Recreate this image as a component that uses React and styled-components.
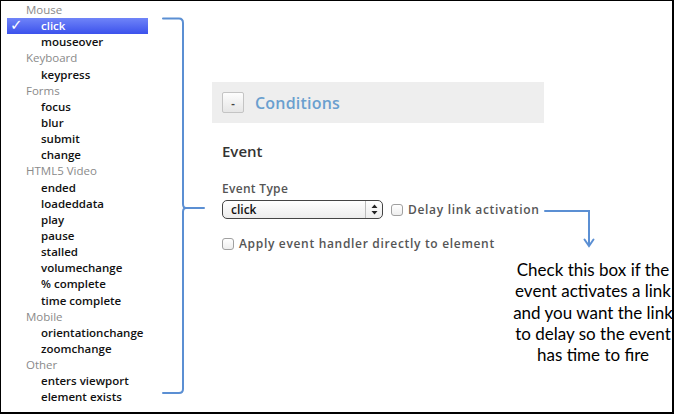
import React from 'react'
import styled, { createGlobalStyle } from 'styled-components'

const GlobalStyle = createGlobalStyle`
  html, body { margin: 0; padding: 0; background: #fff; }
  body { font-family: "Open Sans", "DejaVu Sans", sans-serif; }
`

const Frame = styled.div`
  position: relative;
  width: 674px;
  height: 414px;
  box-sizing: border-box;
  border-style: solid;
  border-color: #000;
  border-width: 1px 2px 2px 1px;
  display: flex;
  overflow: hidden;
`

const Menu = styled.ul`
  list-style: none;
  margin: 0 0 0 6px;
  padding: 1px 0 0;
  width: 141px;
`

const Row = styled.li`
  position: relative;
  height: 16.15px;
  line-height: 16px;
  font-size: 11.5px;
  padding-left: ${p => (p.$group ? 19 : 34)}px;
  color: ${p => (p.$group ? '#8a8a8a' : p.$active ? '#fff' : '#111')};
  font-weight: ${p => (p.$group ? 400 : 600)};
  background: ${p => (p.$active ? 'linear-gradient(#6f84f8, #3c52ec)' : 'transparent')};
  white-space: nowrap;
`

const Check = styled.span`
  position: absolute;
  left: 3px;
  top: -1px;
  font-family: "DejaVu Sans", sans-serif;
  font-size: 15px;
  font-weight: 700;
`

const Main = styled.div`
  margin-left: 64px;
  padding-top: 81px;
  width: 332px;
`

const Header = styled.div`
  display: flex;
  align-items: center;
  gap: 11px;
  height: 41px;
  padding-left: 10px;
  background: #eeeeee;
`

const ToggleButton = styled.div`
  width: 22px;
  height: 21px;
  box-sizing: border-box;
  border: 1px solid #c4c4c4;
  border-radius: 2px;
  background: linear-gradient(#fdfdfd, #e6e6e6);
  display: flex;
  align-items: center;
  justify-content: center;
  font-size: 11px;
  font-weight: 700;
  color: #444;
`

const Title = styled.h2`
  margin: 0;
  font-size: 16px;
  font-weight: 600;
  color: #6a9fcf;
  letter-spacing: 0.2px;
`

const Body = styled.div`
  padding: 18px 0 0 10px;
`

const Section = styled.h3`
  margin: 0 0 19px;
  font-size: 15px;
  font-weight: 600;
  color: #333;
`

const Label = styled.div`
  font-size: 12px;
  font-weight: 600;
  color: #555;
  margin-bottom: 3px;
  letter-spacing: 0.3px;
`

const Line = styled.div`
  display: flex;
  align-items: center;
  gap: 5px;
  margin-bottom: ${p => p.$gap || 0}px;
`

const Select = styled.div`
  width: 161px;
  height: 19px;
  box-sizing: border-box;
  border: 1px solid #444;
  border-radius: 5px;
  background: linear-gradient(#ffffff, #ececec);
  display: flex;
  align-items: center;
  justify-content: space-between;
  padding: 0 0 0 8px;
  font-size: 12px;
  font-weight: 600;
  color: #111;
`

const Arrows = styled.div`
  width: 16px;
  height: 100%;
  border-left: 1px solid #bbb;
  display: flex;
  align-items: center;
  justify-content: center;
`

const Box = styled.span`
  width: 12px;
  height: 12px;
  box-sizing: border-box;
  border: 1px solid #a0a0a0;
  border-radius: 3px;
  background: linear-gradient(#fff, #eee);
  margin-left: ${p => p.$offset || 0}px;
`

const CheckText = styled.span`
  font-size: 12px;
  font-weight: 600;
  color: #555;
  letter-spacing: 0.68px;
`

const Annotation = styled.svg`
  position: absolute;
  left: 0;
  top: 0;
  pointer-events: none;
`

const Callout = styled.p`
  position: absolute;
  left: 506px;
  top: 258px;
  width: 172px;
  margin: 0;
  text-align: center;
  font-family: Lato, "Open Sans", sans-serif;
  font-size: 17px;
  line-height: 21.3px;
  color: #000;
`

const groups = [
  ['Mouse', ['click', 'mouseover']],
  ['Keyboard', ['keypress']],
  ['Forms', ['focus', 'blur', 'submit', 'change']],
  ['HTML5 Video', ['ended', 'loadeddata', 'play', 'pause', 'stalled', 'volumechange', '% complete', 'time complete']],
  ['Mobile', ['orientationchange', 'zoomchange']],
  ['Other', ['enters viewport', 'element exists']]
]

export default function App () {
  return (
    <>
      <GlobalStyle />
      <Frame>
        <Menu>
          {groups.map(([name, items]) => (
            <React.Fragment key={name}>
              <Row $group>{name}</Row>
              {items.map(item => (
                <Row key={item} $active={item === 'click'}>
                  {item === 'click' && <Check>✓</Check>}
                  {item}
                </Row>
              ))}
            </React.Fragment>
          ))}
        </Menu>

        <Main>
          <Header>
            <ToggleButton>-</ToggleButton>
            <Title>Conditions</Title>
          </Header>
          <Body>
            <Section>Event</Section>
            <Label>Event Type</Label>
            <Line $gap={16}>
              <Select>
                click
                <Arrows>
                  <svg width='7' height='11' viewBox='0 0 7 11'>
                    <path d='M3.5 0.5 L6.5 4 H0.5 Z M3.5 10.5 L6.5 7 H0.5 Z' fill='#222' />
                  </svg>
                </Arrows>
              </Select>
              <Box $offset={3} />
              <CheckText>Delay link activation</CheckText>
            </Line>
            <Line>
              <Box />
              <CheckText>Apply event handler directly to element</CheckText>
            </Line>
          </Body>
        </Main>

        <Annotation width='674' height='414' viewBox='0 0 674 414'>
          <g fill='none' stroke='#5b8fd3' strokeWidth='2' strokeLinecap='round'>
            <path d='M162 17.5 H178 Q182 17.5 182 22 V203 Q182 207 185 207 H203 M185 207 Q182 207 182 211 V388 Q182 392 178 392 H162' />
            <path d='M544 210 H588 V244' />
            <path d='M583.5 238.5 L588 245 L592.5 238.5' />
          </g>
        </Annotation>
        <Callout>
          Check this box if the event activates a link and you want the link to delay so the event has time to fire
        </Callout>
      </Frame>
    </>
  )
}
